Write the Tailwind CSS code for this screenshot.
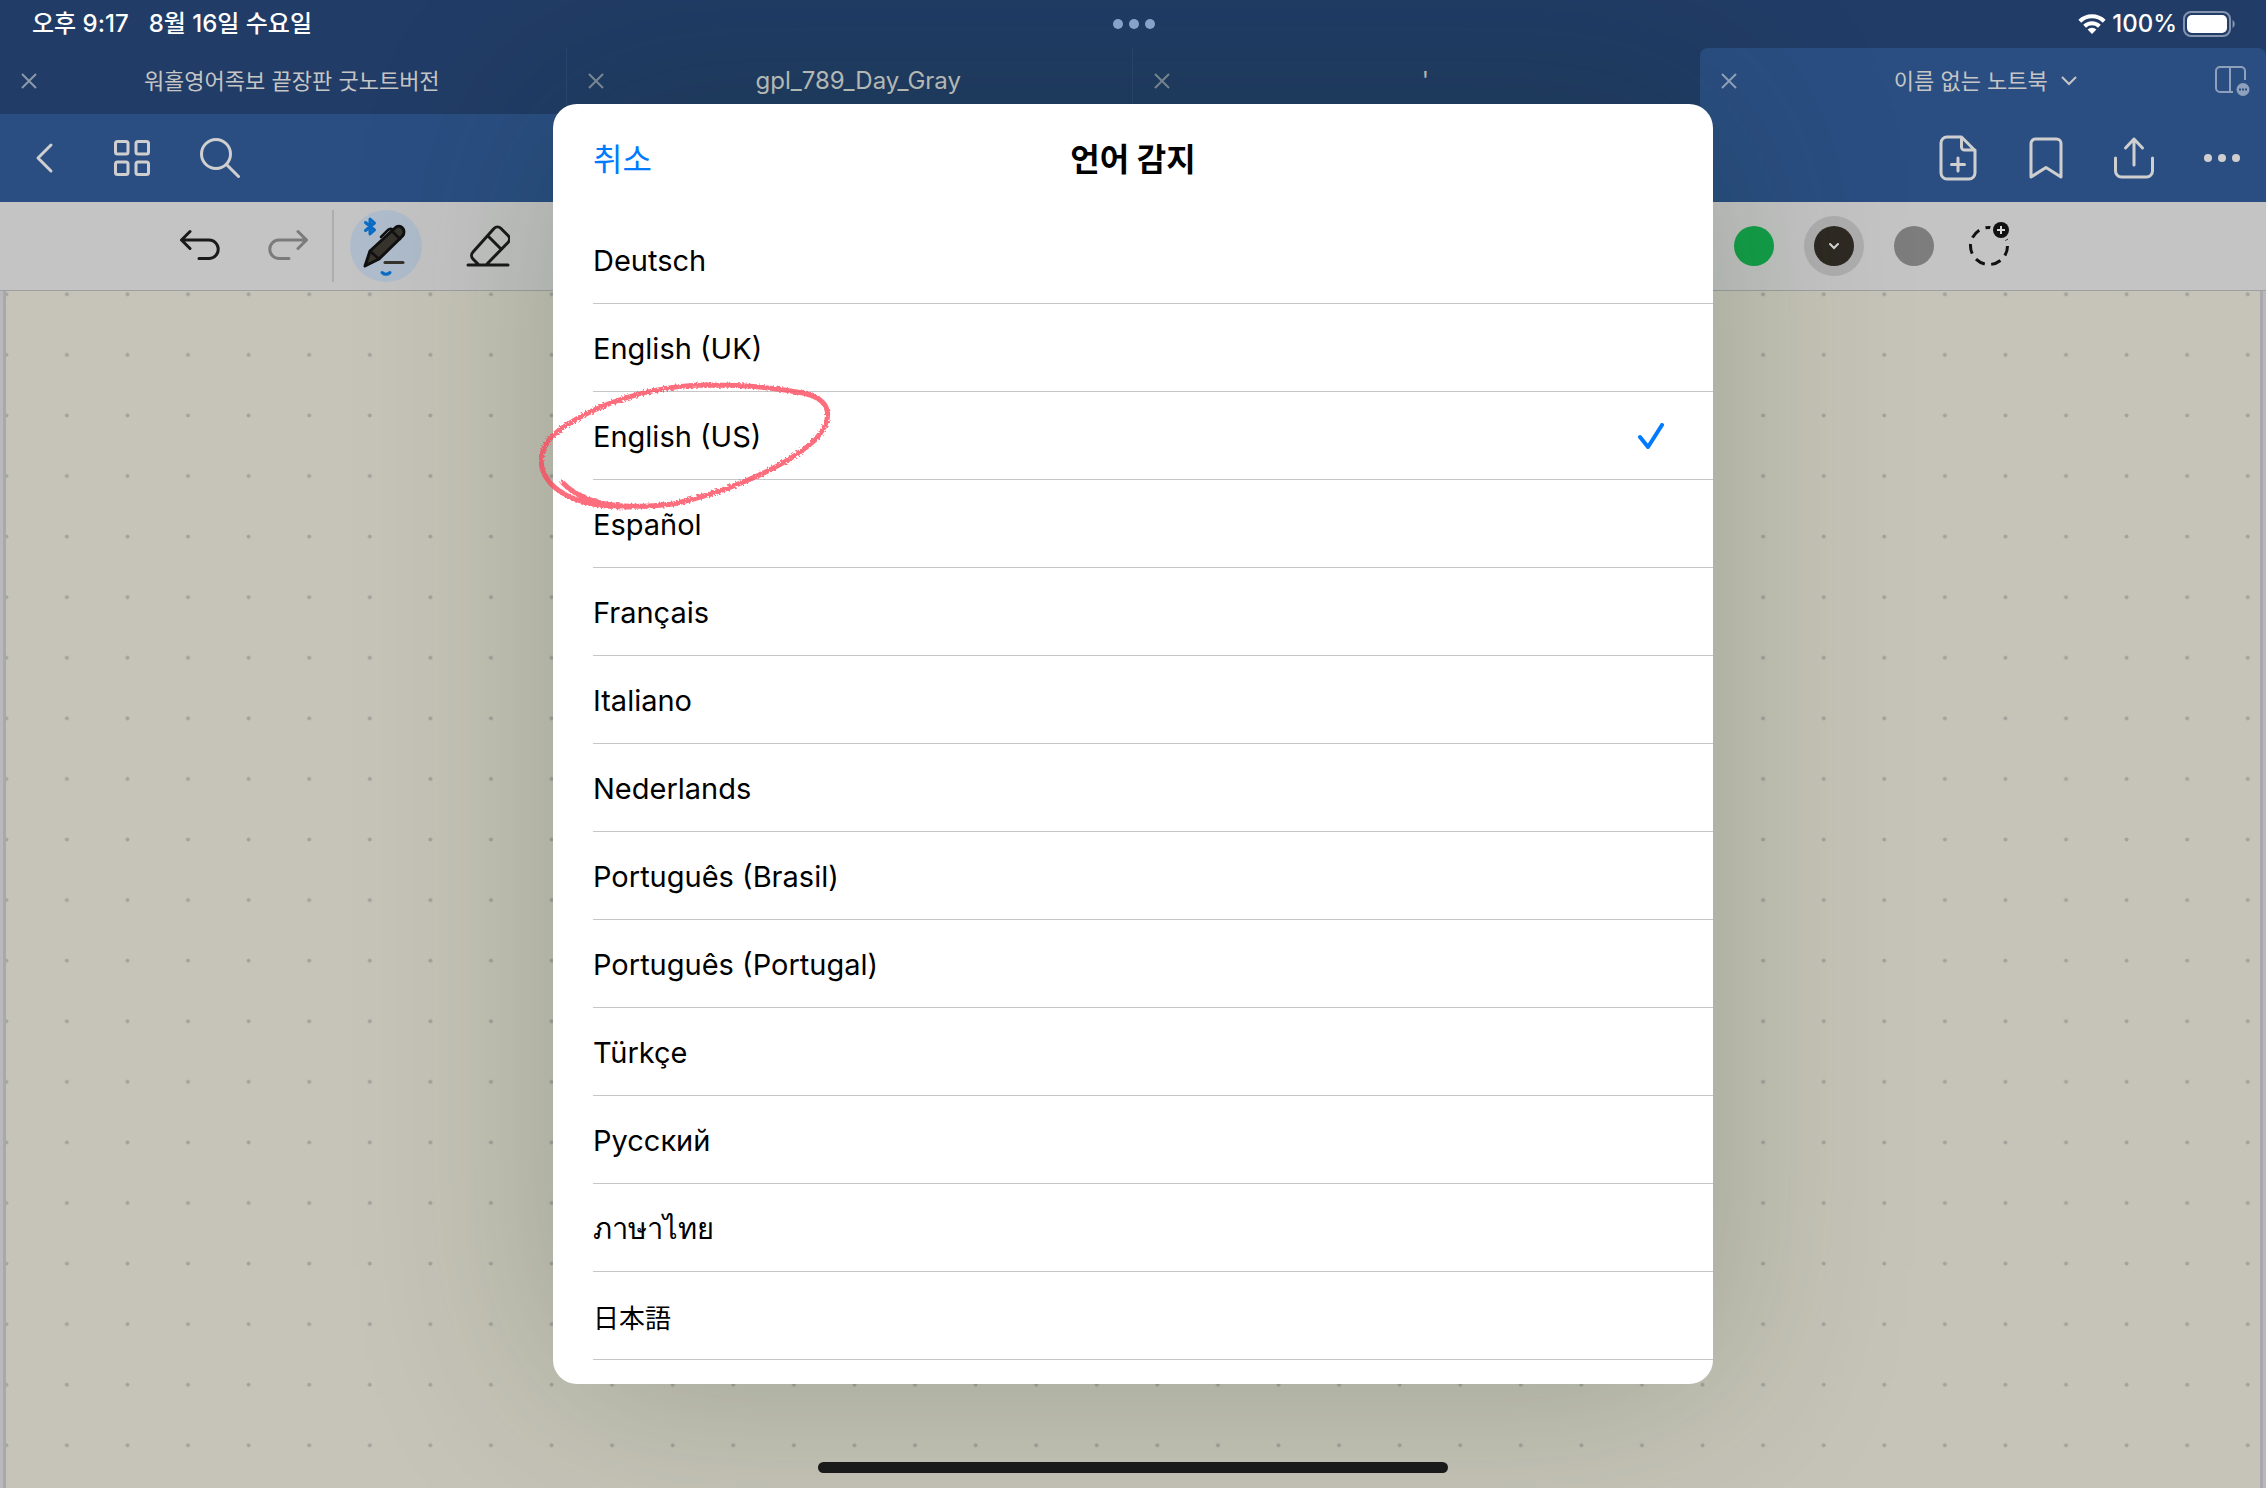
<!DOCTYPE html>
<html lang="ko">

<head>
    <meta charset="UTF-8">
    <meta name="viewport" content="width=device-width, initial-scale=1.0">
    <title>언어 감지</title>
    <script src="https://cdn.jsdelivr.net/npm/@tailwindcss/browser@4"></script>
</head>

<body class="relative flex flex-col min-h-screen overflow-hidden bg-[#c4c3bf] font-['Inter','Noto_Sans_CJK_KR',sans-serif]">

    <!-- Status bar -->
    <div class="grid grid-cols-3 items-center h-12 pl-8 pr-[30px] bg-[#213c66] text-white text-2xl font-medium">
        <div class="flex gap-5">
            <span>오후 9:17</span>
            <span>8월 16일 수요일</span>
        </div>
        <div class="flex justify-center gap-[6px]">
            <span class="size-[10px] rounded-full bg-[#8ea9d4]"></span>
            <span class="size-[10px] rounded-full bg-[#8ea9d4]"></span>
            <span class="size-[10px] rounded-full bg-[#8ea9d4]"></span>
        </div>
        <div class="flex justify-end items-center gap-[6px]">
            <svg width="28" height="22" viewBox="0 0 28 22" fill="none" stroke="#fff" stroke-width="4">
                <path d="M1.8 8.2a17.5 17.5 0 0 1 24.4 0" />
                <path d="M6.6 13.2a10.7 10.7 0 0 1 14.8 0" />
                <path d="M14 21l-4.4-4.6a6.4 6.4 0 0 1 8.8 0z" fill="#fff" stroke="none" />
            </svg>
            <span>100%</span>
            <svg width="53" height="26" viewBox="0 0 53 26">
                <rect x="1" y="1" width="46" height="24" rx="7" fill="none" stroke="#8494ae" stroke-width="2" />
                <rect x="4" y="4" width="40" height="18" rx="5" fill="#fff" />
                <path d="M49.5 9c3 1.5 3 6.5 0 8z" fill="#8494ae" />
            </svg>
        </div>
    </div>

    <!-- Document tabs -->
    <nav class="grid grid-cols-4 h-[66px] bg-[#213c66] text-[#c5c6c5] text-[22px]">
        <div class="flex items-center px-5 border-r border-[#2a4670]">
            <button aria-label="닫기">
                <svg width="18" height="18" viewBox="0 0 18 18" fill="none" stroke="#8c99ab" stroke-width="2"><path d="M2 2l14 14M16 2L2 16" /></svg>
            </button>
            <a href="#" class="flex-1 text-center">워홀영어족보 끝장판 굿노트버전</a>
        </div>
        <div class="flex items-center px-5 border-r border-[#2a4670]">
            <button aria-label="닫기">
                <svg width="18" height="18" viewBox="0 0 18 18" fill="none" stroke="#7f8d9c" stroke-width="2"><path d="M2 2l14 14M16 2L2 16" /></svg>
            </button>
            <a href="#" class="flex-1 text-center text-2xl">gpl_789_Day_Gray</a>
        </div>
        <div class="flex items-center px-5">
            <button aria-label="닫기">
                <svg width="18" height="18" viewBox="0 0 18 18" fill="none" stroke="#7f8d9c" stroke-width="2"><path d="M2 2l14 14M16 2L2 16" /></svg>
            </button>
            <a href="#" class="flex-1 text-center text-2xl">'</a>
        </div>
        <div class="flex items-center pl-5 pr-4 rounded-t-lg bg-[#2a4e82]">
            <button aria-label="닫기">
                <svg width="18" height="18" viewBox="0 0 18 18" fill="none" stroke="#93a5be" stroke-width="2"><path d="M2 2l14 14M16 2L2 16" /></svg>
            </button>
            <a href="#" class="flex flex-1 items-center justify-center gap-3 pl-5">
                이름 없는 노트북
                <svg width="18" height="12" viewBox="0 0 18 12" fill="none" stroke="#c5c6c5" stroke-width="2"><path d="M2 2l7 7 7-7" /></svg>
            </a>
            <button aria-label="창">
                <svg width="36" height="32" viewBox="0 0 36 32" fill="none" stroke="#8ea0bb" stroke-width="2">
                    <path d="M19 27H6a4 4 0 0 1-4-4V6a4 4 0 0 1 4-4h21a4 4 0 0 1 4 4v9M16 2v25" />
                    <circle cx="29" cy="24.5" r="6.5" fill="#8ea0bb" stroke="none" />
                    <path d="M25 24.5h2M28 24.5h2M31 24.5h2" stroke="#2a4e82" />
                </svg>
            </button>
        </div>
    </nav>

    <!-- Navigation bar -->
    <header class="flex items-center justify-between h-[88px] px-6 bg-[#2a4e82] text-[#cfcfcf]">
        <div class="flex items-center gap-12">
            <button aria-label="뒤로">
                <svg width="40" height="40" viewBox="0 0 40 40" fill="none" stroke="currentColor" stroke-width="3" stroke-linecap="round" stroke-linejoin="round"><path d="M27 7L14 20 27 33" /></svg>
            </button>
            <button aria-label="썸네일">
                <svg width="40" height="40" viewBox="0 0 40 40" fill="none" stroke="currentColor" stroke-width="3"><rect x="3.5" y="3.5" width="12.500" height="12.500" rx="2" /><rect x="24" y="3.5" width="12.500" height="12.500" rx="2" /><rect x="3.5" y="24" width="12.500" height="12.500" rx="2" /><rect x="24" y="24" width="12.500" height="12.500" rx="2" /></svg>
            </button>
            <button aria-label="검색">
                <svg width="40" height="40" viewBox="0 0 40 40" fill="none" stroke="currentColor" stroke-width="3" stroke-linecap="round"><circle cx="16" cy="16" r="14.500" /><path d="M26.500 26.500L38.500 38.500" /></svg>
            </button>
        </div>
        <div class="flex items-center gap-12">
            <button aria-label="페이지 추가">
                <svg width="40" height="46" viewBox="0 0 40 46" fill="none" stroke="currentColor" stroke-width="3" stroke-linecap="round" stroke-linejoin="round"><path d="M23.500 2H9a6 6 0 0 0-6 6v30a6 6 0 0 0 6 6h22a6 6 0 0 0 6-6V15.500zM23.500 2v10a3 3 0 0 0 3 3H37M20 23v13M13.500 29.500h13" /></svg>
            </button>
            <button aria-label="책갈피">
                <svg width="40" height="46" viewBox="0 0 40 46" fill="none" stroke="currentColor" stroke-width="3" stroke-linecap="round" stroke-linejoin="round"><path d="M5 42V8.500a4.500 4.500 0 0 1 4.500-4.500h21A4.500 4.500 0 0 1 35 8.500V42L20 32.500z" /></svg>
            </button>
            <button aria-label="공유">
                <svg width="40" height="46" viewBox="0 0 40 46" fill="none" stroke="currentColor" stroke-width="3" stroke-linecap="round" stroke-linejoin="round"><path d="M1.500 23v13a6 6 0 0 0 6 6h25a6 6 0 0 0 6-6V23M20 30V4M11.500 13L20 4l8.500 9" /></svg>
            </button>
            <button aria-label="더 보기">
                <svg width="40" height="46" viewBox="0 0 40 46" fill="currentColor"><circle cx="6" cy="23" r="4" /><circle cx="20" cy="23" r="4" /><circle cx="34" cy="23" r="4" /></svg>
            </button>
        </div>
    </header>

    <!-- Drawing tools -->
    <div class="flex items-center justify-between h-[89px] pl-[180px] pr-[254px] bg-[#c4c4c4] border-b border-[#a0a0a2] text-[#1a1a1a]">
        <div class="flex items-center">
            <button aria-label="실행 취소" class="mr-12">
                <svg width="40" height="40" viewBox="0 0 40 40" fill="none" stroke="currentColor" stroke-width="3" stroke-linecap="round" stroke-linejoin="round"><path d="M10 5.500L1.500 14 10 22.500M1.500 14H29a9 9 0 0 1 0 18.500H19" /></svg>
            </button>
            <button aria-label="다시 실행" class="mr-6 text-[#7b7b7b]">
                <svg width="40" height="40" viewBox="0 0 40 40" fill="none" stroke="currentColor" stroke-width="3" stroke-linecap="round" stroke-linejoin="round"><path d="M30 5.500l8.500 8.500-8.500 8.500M38.500 14H11a9 9 0 0 0 0 18.500h10" /></svg>
            </button>
            <span class="w-[2px] h-[72px] mr-4 bg-[#adadaf]"></span>
            <button aria-label="펜" class="mr-11 rounded-full bg-[#aebccb]">
                <svg width="72" height="72" viewBox="0 0 72 72" fill="none" stroke-linecap="round" stroke-linejoin="round">
                    <path d="M15.500 12.500l9 7.500-4.500 4V9l4.500 4-9 7.500" stroke="#0a6cc4" stroke-width="3" />
                    <path d="M15 56l5-15 25-23c5-5 12 2 7.500 8L29 49z" fill="#37342e" stroke="#111" stroke-width="3" />
                    <path d="M20 41L29 49M42 21l8 8M31 27l7-7q2-2 5-.500" stroke="#111" stroke-width="2.500" />
                    <path d="M35 52.500h18" stroke="#37342e" stroke-width="3" />
                    <path d="M32 62.500q4 3.500 8 0" stroke="#0a6cc4" stroke-width="3" />
                </svg>
            </button>
            <button aria-label="지우개">
                <svg width="44" height="44" viewBox="0 0 44 44" fill="none" stroke="currentColor" stroke-width="3" stroke-linecap="round" stroke-linejoin="round"><path d="M2 41h40M12 40l-5-5a5 5 0 0 1 0-7L28 4.500a5 5 0 0 1 7 0l7 7a5 5 0 0 1 0 7L21 40M22 12l13 13" /></svg>
            </button>
        </div>
        <div class="flex items-center gap-5">
            <button aria-label="초록" class="size-10 mr-5 rounded-full bg-[#14a04a]"></button>
            <button aria-label="검정" class="flex items-center justify-center size-10 rounded-full bg-[#2e2922] ring-10 ring-[#aeaeae]">
                <svg width="12" height="8" viewBox="0 0 12 8" fill="none" stroke="#d8d8d8" stroke-width="2" stroke-linecap="round"><path d="M2 2l4 4 4-4" /></svg>
            </button>
            <button aria-label="회색" class="size-10 ml-5 mr-[14px] rounded-full bg-[#7d7d7d]"></button>
            <button aria-label="색상 추가">
                <svg width="44" height="50" viewBox="0 0 44 50" fill="none"><circle cx="21" cy="25" r="18.500" stroke="#111" stroke-width="3" stroke-dasharray="10 6.600" /><circle cx="33" cy="9" r="11" fill="#c4c4c4" /><circle cx="33" cy="9" r="8" fill="#111" /><path d="M33 5v8M29 9h8" stroke="#d8d8d8" stroke-width="2" /></svg>
            </button>
        </div>
    </div>

    <!-- Dotted page -->
    <main class="flex flex-1 px-[3px] bg-[#b9b9bb]">
        <div class="relative flex-1 border-x-3 border-[#a9a9ad] bg-[#c6c4b8]">
            <svg class="absolute inset-0 size-full">
                <defs>
                    <pattern id="dots" x="-30" y="-27" width="60.58" height="60.58" patternUnits="userSpaceOnUse">
                        <circle cx="30.3" cy="30.3" r="2" fill="#a2a39e" />
                    </pattern>
                </defs>
                <rect width="100%" height="100%" fill="url(#dots)" />
            </svg>
        </div>
    </main>

    <!-- Language sheet -->
    <div class="absolute inset-x-0 top-[104px] flex justify-center">
        <section role="dialog" aria-labelledby="sheet-title" class="relative w-full max-w-[1160px] pb-6 rounded-[24px] bg-white shadow-[0_0_200px_rgba(0,40,0,0.22)]">
            <div class="grid grid-cols-3 items-center h-28 px-10 text-[32px]">
                <button class="justify-self-start text-[#007aff]">취소</button>
                <h1 id="sheet-title" class="text-center font-bold">언어 감지</h1>
            </div>
            <ul class="pl-10 text-[29px] text-black">
                <li class="flex items-center h-[88px] pt-[2px] border-b border-[#c6c6c8]"><button>Deutsch</button></li>
                <li class="flex items-center h-[88px] pt-[2px] border-b border-[#c6c6c8]"><button>English (UK)</button></li>
                <li class="flex items-center h-[88px] pt-[2px] border-b border-[#c6c6c8]">
                    <button class="flex flex-1 items-center justify-between pr-12" aria-pressed="true">
                        English (US)
                        <svg width="28" height="28" viewBox="0 0 28 28" fill="none" stroke="#007aff" stroke-width="4" stroke-linecap="round" stroke-linejoin="round"><path d="M3 14l8 10L25 2" /></svg>
                    </button>
                </li>
                <li class="flex items-center h-[88px] pt-[2px] border-b border-[#c6c6c8]"><button>Español</button></li>
                <li class="flex items-center h-[88px] pt-[2px] border-b border-[#c6c6c8]"><button>Français</button></li>
                <li class="flex items-center h-[88px] pt-[2px] border-b border-[#c6c6c8]"><button>Italiano</button></li>
                <li class="flex items-center h-[88px] pt-[2px] border-b border-[#c6c6c8]"><button>Nederlands</button></li>
                <li class="flex items-center h-[88px] pt-[2px] border-b border-[#c6c6c8]"><button>Português (Brasil)</button></li>
                <li class="flex items-center h-[88px] pt-[2px] border-b border-[#c6c6c8]"><button>Português (Portugal)</button></li>
                <li class="flex items-center h-[88px] pt-[2px] border-b border-[#c6c6c8]"><button>Türkçe</button></li>
                <li class="flex items-center h-[88px] pt-[2px] border-b border-[#c6c6c8]"><button>Русский</button></li>
                <li class="flex items-center h-[88px] pt-[2px] border-b border-[#c6c6c8]"><button lang="th">ภาษาไทย</button></li>
                <li class="flex items-center h-[88px] pt-[2px] border-b border-[#c6c6c8]"><button lang="ja" class="font-['Noto_Sans_CJK_JP',sans-serif] text-[26px]">日本語</button></li>
            </ul>

            <!-- Hand-drawn ring -->
            <svg class="absolute -left-[14px] top-[276px] pointer-events-none" width="296" height="134" viewBox="0 0 296 134" fill="none" stroke="#fb4a5e" stroke-linecap="round">
                <defs>
                    <filter id="chalk" x="-5%" y="-5%" width="110%" height="110%">
                        <feTurbulence type="fractalNoise" baseFrequency="0.5" numOctaves="2" seed="4" />
                        <feDisplacementMap in="SourceGraphic" scale="5" />
                    </filter>
                </defs>
                <g filter="url(#chalk)">
                    <path d="M24 103C48 128 90 129 134 124C180 114 242 91 276 60C294 40 295 20 264 13C222 5 190 5 160 5C110 7 60 23 23 48C-1 65-3 86 11 103C30 123 60 127 92 127" stroke-width="5" opacity=".8" />
                </g>
            </svg>
        </section>
    </div>

    <!-- Home indicator -->
    <div class="absolute inset-x-0 bottom-[15px] flex justify-center">
        <span class="w-[630px] h-[11px] rounded-full bg-[#1a1a1a]"></span>
    </div>

</body>

</html>
